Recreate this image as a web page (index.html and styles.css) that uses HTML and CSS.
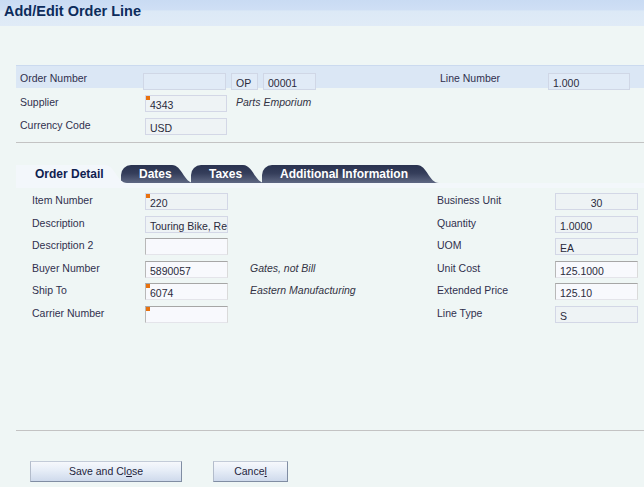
FILE: index.html
```html
<!DOCTYPE html>
<html>
<head>
<meta charset="utf-8">
<link rel="stylesheet" href="styles.css">
</head>
<body>
<div class="header"><h1>Add/Edit Order Line</h1></div>
<div class="content">
  <div class="band">
    <span class="lbl w123">Order Number</span>
    <span class="fld bf w83"></span>
    <span class="fld bf w27 ml5">OP</span>
    <span class="fld bf w53 ml5">00001</span>
    <span class="lbl w108 ml124">Line Number</span>
    <span class="fld bf w82">1.000</span>
  </div>
  <div class="row first">
    <span class="lbl w125">Supplier</span>
    <span class="fld w82 req">4343</span>
    <span class="desc ml9">Parts Emporium</span>
  </div>
  <div class="row">
    <span class="lbl w125">Currency Code</span>
    <span class="fld w82">USD</span>
  </div>
  <div class="sep"></div>

  <div class="tabs">
    <div class="tab active t1">Order Detail</div>
    <div class="tab dark t2">Dates</div>
    <div class="tab dark t3">Taxes</div>
    <div class="tab dark t4">Additional Information</div>
  </div>
  <div class="strip"></div>

  <div class="form">
    <div class="frow">
      <span class="lbl">Item Number</span><span class="fld req">220</span><span></span><span></span>
      <span class="lbl">Business Unit</span><span class="fld c">30</span>
    </div>
    <div class="frow">
      <span class="lbl">Description</span><span class="fld">Touring Bike, Re</span><span></span><span></span>
      <span class="lbl">Quantity</span><span class="fld">1.0000</span>
    </div>
    <div class="frow">
      <span class="lbl">Description 2</span><span class="fld ed"></span><span></span><span></span>
      <span class="lbl">UOM</span><span class="fld">EA</span>
    </div>
    <div class="frow">
      <span class="lbl">Buyer Number</span><span class="fld ed">5890057</span><span></span><span class="desc">Gates, not Bill</span>
      <span class="lbl">Unit Cost</span><span class="fld ed">125.1000</span>
    </div>
    <div class="frow">
      <span class="lbl">Ship To</span><span class="fld ed req">6074</span><span></span><span class="desc">Eastern Manufacturing</span>
      <span class="lbl">Extended Price</span><span class="fld ed">125.10</span>
    </div>
    <div class="frow">
      <span class="lbl">Carrier Number</span><span class="fld ed req"></span><span></span><span></span>
      <span class="lbl">Line Type</span><span class="fld">S</span>
    </div>
  </div>

  <div class="sep bottom"></div>
  <div class="actions">
    <button class="btn save">Save and Cl<u>o</u>se</button>
    <button class="btn cancel">Cance<u>l</u></button>
  </div>
</div>
</body>
</html>
```
FILE: styles.css
```css
* { box-sizing: border-box; }
html, body { margin: 0; }
body {
  width: 644px;
  height: 487px;
  overflow: hidden;
  background: #eff6f5;
  font-family: "Liberation Sans", Arial, sans-serif;
  font-size: 10.5px;
  color: #2f2f4f;
}
.header {
  height: 26px;
  padding: 2px 4px 0;
  background: linear-gradient(#c9dbf3 0, #cfdff5 38%, #dce9f6 42%, #e0ebf7 100%);
}
h1 {
  margin: 0;
  font-size: 14.5px;
  line-height: 18px;
  font-weight: bold;
  color: #0c2c5c;
}
.content { padding-left: 16px; }

.lbl { display: block; line-height: 16px; white-space: nowrap; color: #30304e; }
.desc { display: block; line-height: 16px; font-style: italic; white-space: nowrap; color: #333344; }

.fld {
  display: block;
  position: relative;
  height: 17px;
  border: 1px solid #d3d7e6;
  background: #eef3f5;
  padding: 1px 4px 0;
  line-height: 16px;
  white-space: nowrap;
  overflow: hidden;
  color: #2a2a3c;
}
.fld.bf { background: #e1ebf7; border-color: #d0d7e6; }
.fld.ed {
  background: #f8f9fd;
  border-color: #a6a6a6 #dadada #e4e4ea #b8b8b8;
}
.fld.c { text-align: center; }
.fld.req::before {
  content: "";
  position: absolute;
  left: 0;
  top: 0;
  width: 4px;
  height: 4px;
  background: #e8720e;
}

.w123 { width: 123px; }
.w125 { width: 125px; }
.w108 { width: 108px; }
.w83 { width: 83px; }
.w82 { width: 82px; }
.w27 { width: 27px; }
.w53 { width: 53px; }
.ml5 { margin-left: 5px; }
.ml9 { margin-left: 9px; }
.ml124 { margin-left: 124px; }

.band {
  margin-top: 39px;
  height: 23px;
  border-top: 1px solid #cbdaef;
  background: #dbe7f5;
  display: flex;
  align-items: flex-start;
  padding-left: 4px;
}
.band .lbl { margin-top: 4px; }
.band .fld { margin-top: 7px; }

.row {
  display: flex;
  align-items: flex-start;
  height: 23px;
  padding-left: 4px;
}
.row.first { margin-top: 4px; }
.row .lbl, .row .desc { margin-top: 2px; }
.row .fld { margin-top: 3px; }

.sep { height: 1px; background: #c3c3c3; margin-top: 4px; }
.sep.bottom { margin-top: 104px; }

.tabs {
  display: flex;
  margin-top: 22px;
  height: 18px;
}
.tab {
  position: relative;
  height: 18px;
  line-height: 18px;
  font-size: 12px;
  font-weight: bold;
  white-space: nowrap;
  padding-left: 18px;
}
.tab::after {
  content: "";
  position: absolute;
  top: 0;
  right: -22px;
  width: 22px;
  height: 18px;
  clip-path: path("M0 0 C10 0 12 18 22 18 L0 18 Z");
}
.tab.active {
  background: #f3f7fb;
  color: #0f2150;
  padding-left: 19px;
  z-index: 4;
}
.tab.active::after { background: #f3f7fb; }
.tab.dark {
  color: #ffffff;
  border-top-left-radius: 10px;
  background: linear-gradient(#2a3350 0%, #343d5a 45%, #5f6883 100%);
}
.tab.dark::after { background: linear-gradient(#2a3350 0%, #343d5a 45%, #5f6883 100%); }
.t1 { width: 89px; }
.t2 { width: 51px; margin-left: 16px; z-index: 3; }
.t3 { width: 52px; margin-left: 19px; z-index: 2; }
.t4 { width: 155px; margin-left: 19px; z-index: 1; }

.strip { height: 5px; background: #f3f7fb; }

.form { margin-top: 2px; padding-left: 16px; }
.frow {
  display: grid;
  grid-template-columns: 113px 83px 22px 187px 118px 83px;
  align-items: start;
  height: 22.6px;
}
.frow .lbl, .frow .desc { margin-top: 2px; }
.frow .fld { margin-top: 3px; }

.actions {
  display: flex;
  margin-top: 30px;
  padding-left: 14px;
}
.btn {
  display: block;
  height: 21px;
  padding: 0;
  border: 1px solid #808da3;
  border-top-color: #c3cbd8;
  border-left-color: #b3bccb;
  background: linear-gradient(#f6f8fc 0%, #e6edf7 45%, #cfdaec 100%);
  font-family: "Liberation Sans", Arial, sans-serif;
  font-size: 10.5px;
  color: #1e1e3c;
  text-align: center;
}
.btn.save { width: 152px; }
.btn.cancel { width: 75px; margin-left: 31px; }
```
